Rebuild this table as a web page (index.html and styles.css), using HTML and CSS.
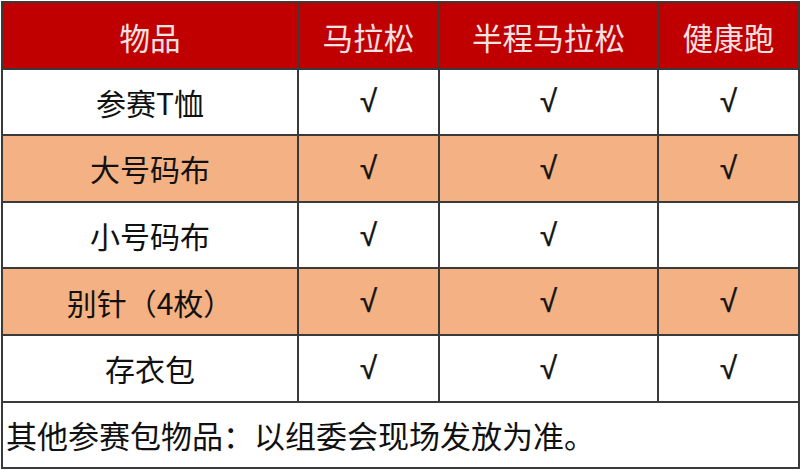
FILE: index.html
```html
<!DOCTYPE html>
<html lang="zh-CN">
<head>
<meta charset="utf-8">
<link rel="stylesheet" href="styles.css">
</head>
<body>
<table class="kit">
  <colgroup>
    <col class="c-item"><col class="c-full"><col class="c-half"><col class="c-fun">
  </colgroup>
  <thead>
    <tr class="head"><th>物品</th><th>马拉松</th><th>半程马拉松</th><th>健康跑</th></tr>
  </thead>
  <tbody>
    <tr><td>参赛T恤</td><td class="ck">√</td><td class="ck">√</td><td class="ck">√</td></tr>
    <tr class="alt"><td>大号码布</td><td class="ck">√</td><td class="ck">√</td><td class="ck">√</td></tr>
    <tr><td>小号码布</td><td class="ck">√</td><td class="ck">√</td><td class="ck"></td></tr>
    <tr class="alt"><td>别针（4枚）</td><td class="ck">√</td><td class="ck">√</td><td class="ck">√</td></tr>
    <tr><td>存衣包</td><td class="ck">√</td><td class="ck">√</td><td class="ck">√</td></tr>
    <tr><td class="note" colspan="4">其他参赛包物品：以组委会现场发放为准。</td></tr>
  </tbody>
</table>
</body>
</html>
```
FILE: styles.css
```css
html, body {
  margin: 0;
  padding: 0;
  background: #ffffff;
}
.kit {
  margin: 1px 0 0 1px;
  width: 797px;
  border-collapse: collapse;
  table-layout: fixed;
  font-family: "Noto Sans CJK SC", "Noto Sans", sans-serif;
  font-size: 30px;
  color: #111111;
}
.c-item { width: 296px; }
.c-full { width: 141px; }
.c-half { width: 219px; }
.c-fun { width: 141px; }
.kit th, .kit td {
  border: 2px solid #3a3a3a;
  height: 64.6px;
  padding: 0;
  text-align: center;
  vertical-align: middle;
  line-height: 1;
}
.head th {
  background: #c00000;
  color: #f6e2e2;
  font-weight: normal;
  font-size: 30.6px;
  padding-top: 4px;
  height: 60.6px;
}
.alt td {
  background: #f4b183;
}
.ck {
  font-family: "Liberation Sans", "DejaVu Sans", sans-serif;
  font-size: 31px;
  -webkit-text-stroke: 0.5px #111111;
}
.kit td.note {
  text-align: left;
  padding-left: 3px;
  font-size: 31px;
}
```
